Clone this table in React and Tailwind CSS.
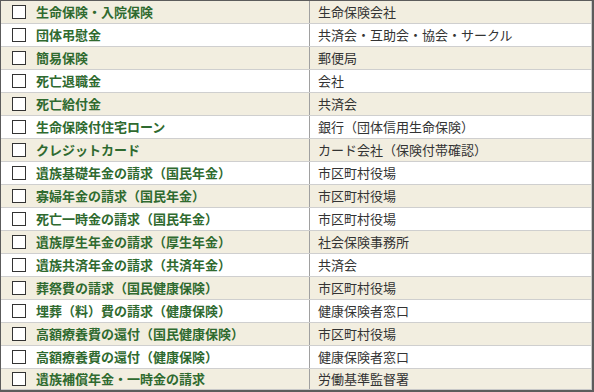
import React from "react";

const rows = [
  ["生命保険・入院保険", "生命保険会社"],
  ["団体弔慰金", "共済会・互助会・協会・サークル"],
  ["簡易保険", "郵便局"],
  ["死亡退職金", "会社"],
  ["死亡給付金", "共済会"],
  ["生命保険付住宅ローン", "銀行（団体信用生命保険）"],
  ["クレジットカード", "カード会社（保険付帯確認）"],
  ["遺族基礎年金の請求（国民年金）", "市区町村役場"],
  ["寡婦年金の請求（国民年金）", "市区町村役場"],
  ["死亡一時金の請求（国民年金）", "市区町村役場"],
  ["遺族厚生年金の請求（厚生年金）", "社会保険事務所"],
  ["遺族共済年金の請求（共済年金）", "共済会"],
  ["葬祭費の請求（国民健康保険）", "市区町村役場"],
  ["埋葬（料）費の請求（健康保険）", "健康保険者窓口"],
  ["高額療養費の還付（国民健康保険）", "市区町村役場"],
  ["高額療養費の還付（健康保険）", "健康保険者窓口"],
  ["遺族補償年金・一時金の請求", "労働基準監督署"],
];

export default function App() {
  return (
    <div
      className="w-[594px] h-[392px] overflow-hidden bg-white border-l border-t border-r-2 border-b-2 border-[#5c5c5c]"
      style={{ fontFamily: '"Noto Sans CJK JP", "Noto Sans", sans-serif' }}
    >
      <div className="flex flex-col border-r border-b border-[#c8c8c8] h-full">
        {rows.map(([a, b], i) => (
          <div
            key={i}
            className={`flex shrink-0 ${
              i === rows.length - 1 ? "h-[20px]" : "h-[23px] border-b border-[#cfcfcf]"
            } ${i % 2 === 0 ? "bg-[#f2eee0]" : "bg-white"}`}
          >
            <div className="w-[309px] flex items-center border-r border-[#a0a0a0]">
              <div className="ml-[11px] w-[14px] h-[14px] border border-[#333] bg-white shrink-0" />
              <span className="ml-[10px] pb-[2px] text-[13px] leading-none font-bold text-[#2f6a2f]">
                {a}
              </span>
            </div>
            <div className="flex-1 flex items-center pl-[8px] pb-[2px] text-[13px] leading-none text-[#333]">
              {b}
            </div>
          </div>
        ))}
      </div>
    </div>
  );
}
